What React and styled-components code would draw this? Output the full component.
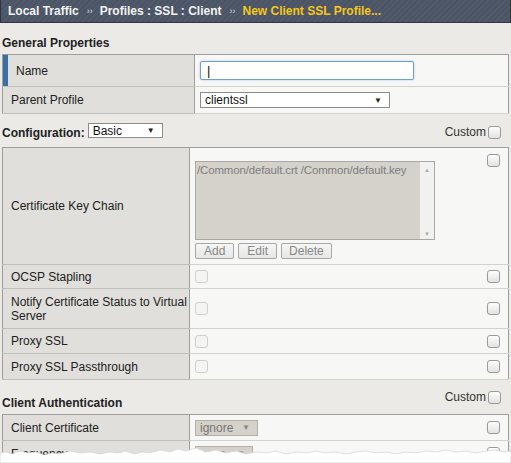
import styled, { createGlobalStyle } from "styled-components";

const GlobalStyle = createGlobalStyle`
  html, body {
    margin: 0;
    padding: 0;
    background: #ebeae6;
    font-family: "Liberation Sans", Arial, sans-serif;
    font-size: 12px;
    color: #222;
  }
`;

const Page = styled.div`
  position: relative;
  width: 511px;
  height: 463px;
  overflow: hidden;
  background: #ebeae6;
`;

const Crumbs = styled.div`
  height: 23px;
  box-sizing: border-box;
  display: flex;
  align-items: center;
  padding-left: 7px;
  background: repeating-linear-gradient(
      135deg,
      rgba(255, 255, 255, 0.035) 0 2px,
      rgba(0, 0, 0, 0) 2px 4px
    ),
    #4a5465;
  border: 1px solid #2f3540;
  border-top: none;
  font-weight: bold;
  font-size: 12px;
  color: #f2f2f2;
`;

const Sep = styled.span`
  font-size: 9px;
  color: #b8bcc4;
  margin: 0 7px 0 8px;
`;

const Current = styled.span`
  color: #f6c619;
`;

const SectionHead = styled.div`
  display: flex;
  align-items: flex-end;
  justify-content: space-between;
  height: ${(p) => p.h}px;
  padding: 0 10px 0 2px;
  box-sizing: border-box;
`;

const SectionTitle = styled.div`
  font-weight: bold;
  font-size: 12px;
  display: flex;
  align-items: center;
  gap: 3px;
  padding-bottom: ${(p) => p.pb ?? 4}px;
`;

const CustomBox = styled.label`
  display: flex;
  align-items: center;
  gap: 2px;
  color: #333;
  padding-bottom: ${(p) => p.pb ?? 8}px;
`;

const Box = styled.span`
  display: inline-block;
  width: 11px;
  height: 11px;
  border: 1px solid ${(p) => (p.faint ? "#cfcfcf" : "#9a9a9a")};
  border-radius: 3px;
  background: ${(p) =>
    p.faint ? "#f4f4f2" : "linear-gradient(#fdfdfd, #e2e2e2)"};
`;

const Table = styled.table`
  margin-left: 2px;
  width: 507px;
  border-collapse: collapse;
  border: 1px solid #9e9e9e;
  table-layout: fixed;
`;

const Label = styled.td`
  width: ${(p) => p.w}px;
  height: ${(p) => p.h}px;
  box-sizing: border-box;
  background: #e0dfdb;
  border-bottom: 1px solid #bfbfbc;
  border-right: 1px solid #9e9e9e;
  padding: 0 0 0 ${(p) => (p.marked ? 13 : 8)}px;
  line-height: 14px;
  white-space: nowrap;
  vertical-align: middle;
  box-shadow: ${(p) => (p.marked ? "inset 5px 0 0 #3a6ea5" : "none")};
`;

const Value = styled.td`
  background: #f7f7f5;
  border-bottom: 1px solid #d2d2cf;
  padding: 0 8px 0 5px;
  vertical-align: ${(p) => (p.top ? "top" : "middle")};
`;

const ValueRow = styled.div`
  display: flex;
  justify-content: space-between;
  align-items: ${(p) => (p.start ? "flex-start" : "center")};
`;

const TextInput = styled.div`
  width: 214px;
  height: 19px;
  box-sizing: border-box;
  border: 1px solid #6f9fd6;
  border-radius: 2px;
  box-shadow: 0 0 2px #9ec3ea;
  background: #fff;
  display: flex;
  align-items: center;
  padding-left: 6px;
  font-size: 13px;
  color: #111;
`;

const Select = styled.div`
  width: ${(p) => p.w}px;
  height: ${(p) => p.h ?? 16}px;
  box-sizing: border-box;
  border: 1px solid ${(p) => (p.disabled ? "#b3b0aa" : "#8c8c8c")};
  background: ${(p) => (p.disabled ? "#d5d1cb" : "#fff")};
  color: ${(p) => (p.disabled ? "#777" : "#111")};
  display: flex;
  align-items: center;
  justify-content: space-between;
  padding: 0 7px 0 4px;
  font-size: 12px;
  font-weight: normal;

  &::after {
    content: "▼";
    font-size: 8px;
    color: ${(p) => (p.disabled ? "#888" : "#222")};
  }
`;

const KeyList = styled.div`
  width: 240px;
  height: 79px;
  box-sizing: border-box;
  border: 1px solid #a8a8a8;
  background: #d5d1cb;
  display: flex;
  margin-top: 13px;
`;

const KeyText = styled.div`
  flex: 1;
  padding: 2px 1px;
  color: #7d7d7d;
  font-size: 11.4px;
  letter-spacing: -0.1px;
  white-space: nowrap;
  overflow: hidden;
`;

const Scroll = styled.div`
  width: 14px;
  background: #f1f1f0;
  display: flex;
  flex-direction: column;
  justify-content: space-between;
  align-items: center;
  padding: 5px 0 2px;
  font-size: 6px;
  color: #aaa;
`;

const Buttons = styled.div`
  display: flex;
  gap: 4px;
  margin: 3px 0 5px;
`;

const Btn = styled.span`
  height: 16px;
  box-sizing: border-box;
  border: 1px solid #a8a8a8;
  border-radius: 2px;
  background: linear-gradient(#f6f6f6, #e6e6e4);
  color: #888;
  display: inline-flex;
  align-items: center;
  padding: 0 ${(p) => p.px}px;
  font-size: 12px;
`;

const Tear = styled.svg`
  position: absolute;
  left: 0;
  bottom: 0;
  width: 511px;
  height: 18px;
`;

const configRows = [
  { label: ["OCSP Stapling"], h: 24 },
  { label: ["Notify Certificate Status to Virtual", "Server"], h: 40 },
  { label: ["Proxy SSL"], h: 25 },
  { label: ["Proxy SSL Passthrough"], h: 26 },
];

export default function App() {
  return (
    <Page>
      <GlobalStyle />
      <Crumbs>
        Local Traffic
        <Sep>››</Sep>
        Profiles : SSL : Client
        <Sep>››</Sep>
        <Current>New Client SSL Profile...</Current>
      </Crumbs>

      <SectionHead h={31}>
        <SectionTitle>General Properties</SectionTitle>
      </SectionHead>
      <Table>
        <tbody>
          <tr>
            <Label w={192} h={32} marked>
              Name
            </Label>
            <Value>
              <TextInput>|</TextInput>
            </Value>
          </tr>
          <tr>
            <Label w={192} h={27}>
              Parent Profile
            </Label>
            <Value>
              <Select w={190}>clientssl</Select>
            </Value>
          </tr>
        </tbody>
      </Table>

      <SectionHead h={33}>
        <SectionTitle pb={5}>
          Configuration:
          <Select w={75} h={15} style={{ marginBottom: 4 }}>
            Basic
          </Select>
        </SectionTitle>
        <CustomBox pb={8}>
          Custom <Box />
        </CustomBox>
      </SectionHead>
      <Table>
        <tbody>
          <tr>
            <Label w={187} h={116}>
              Certificate Key Chain
            </Label>
            <Value top>
              <ValueRow start>
                <div>
                  <KeyList>
                    <KeyText>/Common/default.crt /Common/default.key</KeyText>
                    <Scroll>
                      <span>▲</span>
                      <span>▼</span>
                    </Scroll>
                  </KeyList>
                  <Buttons>
                    <Btn px={8}>Add</Btn>
                    <Btn px={8}>Edit</Btn>
                    <Btn px={7}>Delete</Btn>
                  </Buttons>
                </div>
                <Box style={{ marginTop: 6 }} />
              </ValueRow>
            </Value>
          </tr>
          {configRows.map((r) => (
            <tr key={r.label[0]}>
              <Label w={187} h={r.h}>
                {r.label.map((line, i) => (
                  <span key={i}>
                    {i > 0 && <br />}
                    {line}
                  </span>
                ))}
              </Label>
              <Value>
                <ValueRow>
                  <Box faint />
                  <Box />
                </ValueRow>
              </Value>
            </tr>
          ))}
        </tbody>
      </Table>

      <SectionHead h={34}>
        <SectionTitle pb={4}>Client Authentication</SectionTitle>
        <CustomBox pb={10}>
          Custom <Box />
        </CustomBox>
      </SectionHead>
      <Table>
        <tbody>
          <tr>
            <Label w={187} h={26}>
              Client Certificate
            </Label>
            <Value>
              <ValueRow>
                <Select w={63} disabled>
                  ignore
                </Select>
                <Box />
              </ValueRow>
            </Value>
          </tr>
          <tr>
            <Label w={187} h={26}>
              Frequency
            </Label>
            <Value>
              <ValueRow>
                <Select w={58} disabled>
                  once
                </Select>
                <Box />
              </ValueRow>
            </Value>
          </tr>
        </tbody>
      </Table>

      <Tear viewBox="0 0 511 18" preserveAspectRatio="none">
        <path
          d="M0 8 L6 7 L12 9 L20 6 L28 8 L36 7 L44 10 L52 8 L60 9 L70 6 L80 8 L90 7 L100 9 L110 7 L118 8 L126 6 L134 9 L142 7 L150 8 L160 5 L170 7 L178 4 L186 6 L196 3 L206 7 L216 5 L226 8 L236 6 L246 9 L256 7 L266 8 L276 6 L286 9 L296 7 L306 8 L316 6 L326 8 L336 7 L346 9 L356 7 L366 6 L376 8 L386 7 L396 9 L406 7 L416 8 L426 6 L436 7 L446 5 L456 7 L466 6 L476 8 L486 6 L496 5 L504 7 L511 6 L511 18 L0 18 Z"
          fill="#ffffff"
          stroke="#d8d8d8"
          strokeWidth="0.8"
        />
      </Tear>
    </Page>
  );
}
